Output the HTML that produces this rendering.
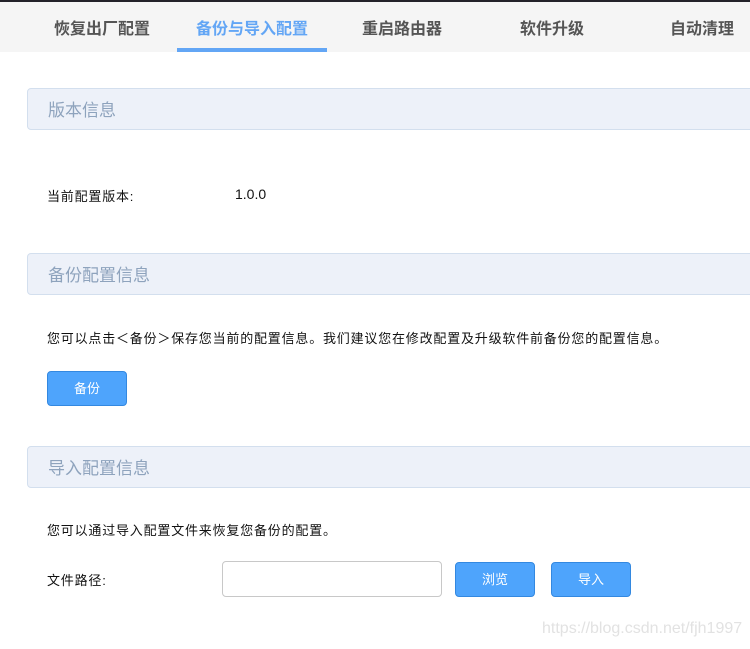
<!DOCTYPE html>
<html><head><meta charset="utf-8"><style>
*{margin:0;padding:0;box-sizing:border-box}
body{width:750px;height:649px;overflow:hidden;background:#fff;font-family:"Liberation Sans","Noto Sans CJK SC",sans-serif;position:relative}
.top{position:absolute;left:0;top:0;width:750px;height:2px;background:#23222a}
.tabs{position:absolute;left:0;top:2px;width:750px;height:50px;background:#f5f5f5}
.tab{position:absolute;top:13px;font-size:16px;font-weight:bold;color:#555;white-space:nowrap}
.tab.act{color:#63a6f5}
.ul{position:absolute;left:177px;top:46px;width:150px;height:4px;background:#63a6f5}
.hd{position:absolute;left:27px;width:740px;height:42px;background:#edf1f9;border:1px solid #d3dfee;border-radius:4px;font-size:17px;color:#8ea3bd;padding:7px 0 0 20px}
.t{position:absolute;font-size:13px;color:#111;white-space:nowrap;letter-spacing:0.8px}
.btn{position:absolute;height:35px;width:80px;background:#4ea4fc;border:1px solid #3388e0;border-radius:4px;color:#fff;font-size:13px;text-align:center;line-height:33px}
.inp{position:absolute;left:222px;top:561px;width:220px;height:36px;border:1px solid #c8c8c8;border-radius:4px;background:#fff}
.wm{position:absolute;left:542px;top:620px;font-size:16px;color:#e2e2e2}
</style></head><body>
<div class="top"></div>
<div class="tabs">
<div class="tab" style="left:54px">恢复出厂配置</div>
<div class="tab act" style="left:196px">备份与导入配置</div>
<div class="tab" style="left:362px">重启路由器</div>
<div class="tab" style="left:520px">软件升级</div>
<div class="tab" style="left:670px">自动清理</div>
<div class="ul"></div>
</div>
<div class="hd" style="top:88px">版本信息</div>
<div class="t" style="left:47px;top:186px">当前配置版本:</div>
<div class="t" style="left:235px;top:186px;font-size:14px;letter-spacing:0">1.0.0</div>
<div class="hd" style="top:253px">备份配置信息</div>
<div class="t" style="left:47px;top:328px">您可以点击＜备份＞保存您当前的配置信息。我们建议您在修改配置及升级软件前备份您的配置信息。</div>
<div class="btn" style="left:47px;top:371px">备份</div>
<div class="hd" style="top:446px">导入配置信息</div>
<div class="t" style="left:47px;top:520px">您可以通过导入配置文件来恢复您备份的配置。</div>
<div class="t" style="left:47px;top:570px">文件路径:</div>
<div class="inp"></div>
<div class="btn" style="left:455px;top:562px">浏览</div>
<div class="btn" style="left:551px;top:562px">导入</div>
<div class="wm">https://blog.csdn.net/fjh1997</div>
</body></html>
